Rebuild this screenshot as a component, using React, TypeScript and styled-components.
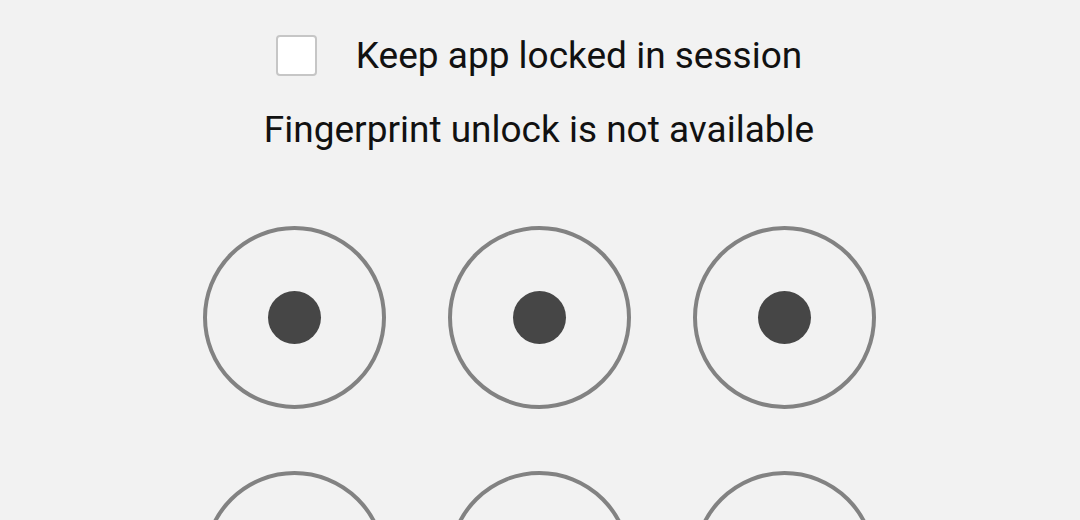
import React, { FC } from 'react';
import styled, { createGlobalStyle } from 'styled-components';

const GlobalStyle = createGlobalStyle`
  html, body {
    margin: 0;
    padding: 0;
    background: #f2f2f2;
    font-family: Roboto, "Liberation Sans", sans-serif;
  }
`;

const PATTERN_DOTS = [1, 2, 3, 4, 5, 6, 7, 8, 9];

const App: FC = () => {
  return (
    <>
      <GlobalStyle />
      <Screen>
        <LockRow>
          <CheckBox type="checkbox" />
          <Label>Keep app locked in session</Label>
        </LockRow>
        <Notice>Fingerprint unlock is not available</Notice>
        <PatternGrid>
          {PATTERN_DOTS.map((id) => (
            <Ring key={id}>
              <Dot />
            </Ring>
          ))}
        </PatternGrid>
      </Screen>
    </>
  );
};

const Screen = styled.div`
  width: 1080px;
  height: 520px;
  overflow: hidden;
  display: flex;
  flex-direction: column;
  align-items: center;
  padding-top: 35px;
  padding-right: 2px;
  box-sizing: border-box;
`;

const LockRow = styled.label`
  display: flex;
  align-items: center;
  gap: 39px;
  height: 41px;
`;

const CheckBox = styled.input`
  appearance: none;
  margin: 0;
  width: 41px;
  height: 41px;
  box-sizing: border-box;
  background: #fff;
  border: 2px solid #c6c6c6;
  border-radius: 4px;
`;

const Label = styled.span`
  font-size: 37px;
  line-height: 44px;
  color: #111;
`;

const Notice = styled.div`
  margin-top: 32px;
  font-size: 37px;
  line-height: 44px;
  color: #111;
`;

const PatternGrid = styled.div`
  margin-top: 74px;
  display: grid;
  grid-template-columns: repeat(3, 183px);
  column-gap: 62px;
  row-gap: 62px;
`;

const Ring = styled.div`
  width: 183px;
  height: 183px;
  box-sizing: border-box;
  border: 4px solid #828282;
  border-radius: 50%;
  display: flex;
  align-items: center;
  justify-content: center;
`;

const Dot = styled.div`
  width: 53px;
  height: 53px;
  border-radius: 50%;
  background: #464646;
`;

export default App;
